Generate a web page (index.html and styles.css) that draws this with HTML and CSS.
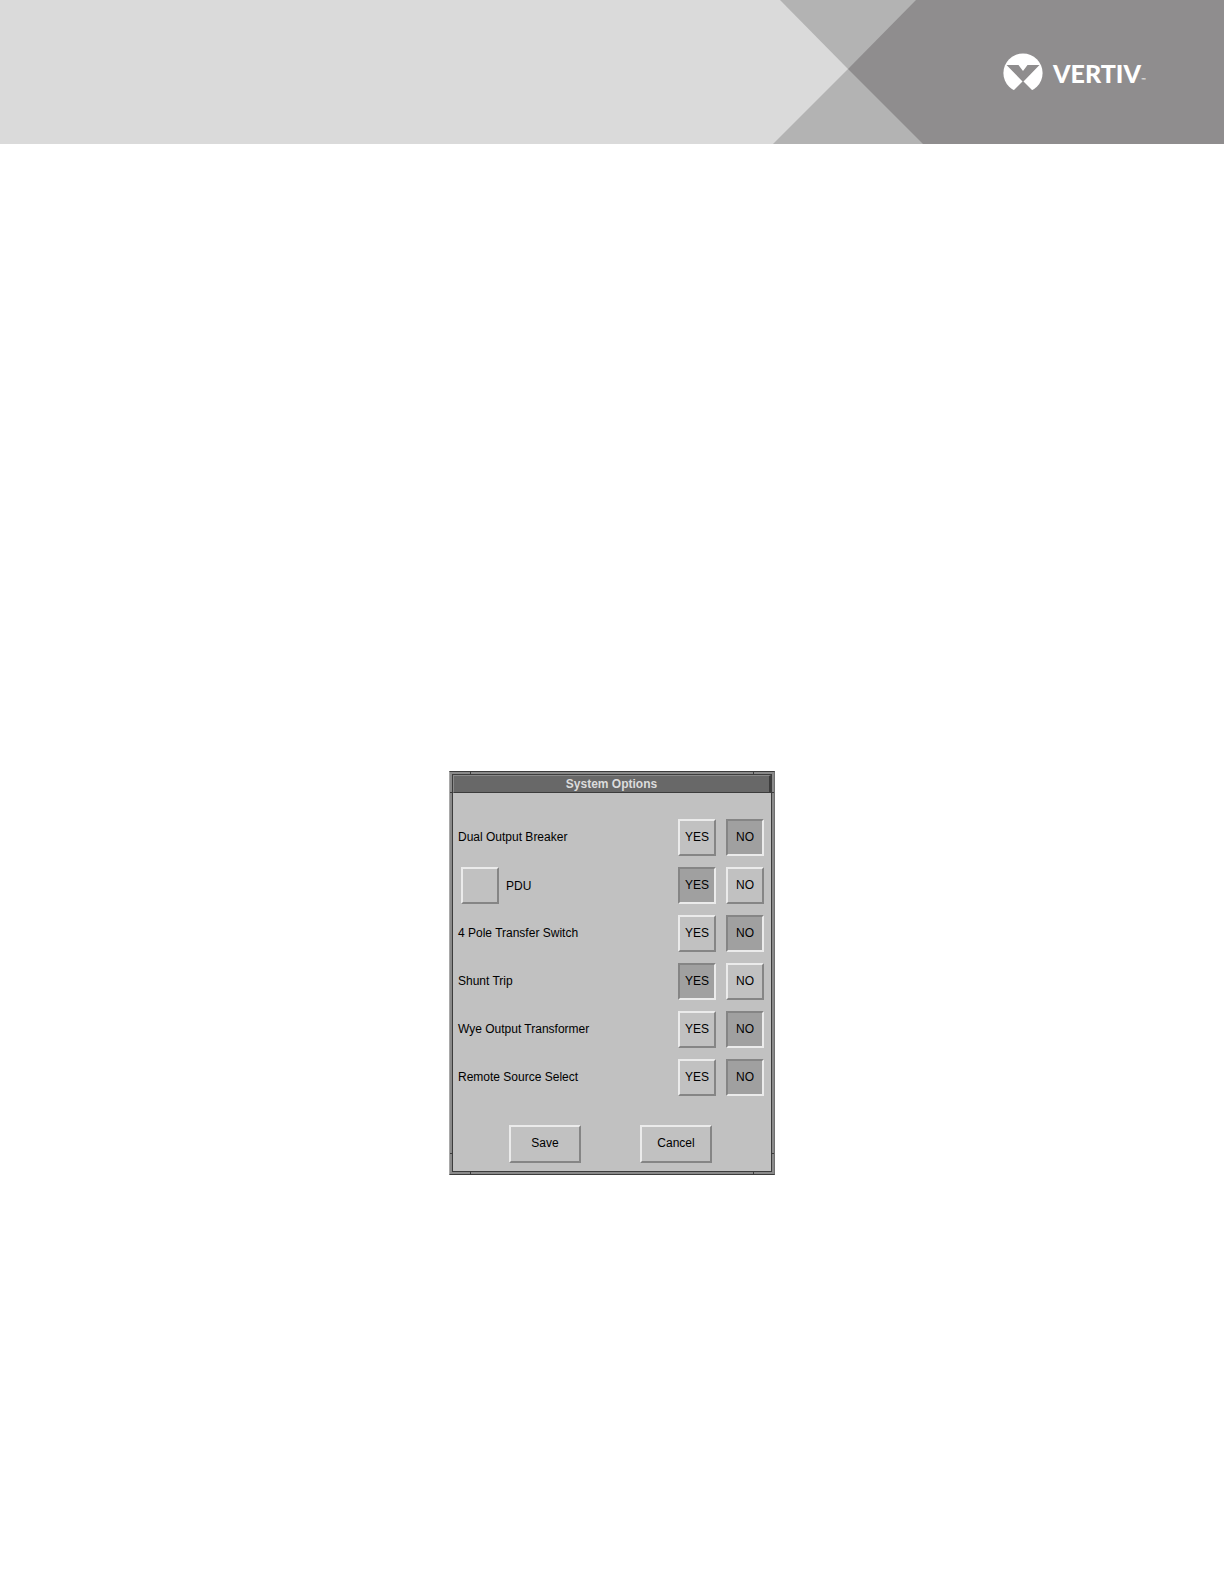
FILE: index.html
```html
<!DOCTYPE html>
<html lang="en">
<head>
    <meta charset="UTF-8">
    <meta name="viewport" content="width=device-width, initial-scale=1.0">
    <title>System Options</title>
    <link rel="stylesheet" href="styles.css">
</head>
<body>
    <header class="banner">
        <svg class="banner-shape" width="150" height="144" viewBox="0 0 150 144" aria-hidden="true">
            <rect width="150" height="144" fill="#b3b3b3"/>
            <path d="M0 0H7L75 69L0 144Z" fill="#dadada"/>
            <path d="M150 0H143L75 69L150 144Z" fill="#8f8d8e"/>
        </svg>
        <div class="banner-brand">
            <svg class="brand-mark" width="40" height="40" viewBox="0 0 40 40" aria-hidden="true">
                <circle cx="20" cy="20" r="19.6" fill="#fff"/>
                <path d="M3.5 12H15.5L20 18L24.5 12H36.5L20 29Z" fill="#8f8d8e"/>
                <path d="M20 28L32 40H8Z" fill="#8f8d8e"/>
            </svg>
            <span class="brand-name">VERTIV</span>
            <span class="brand-tm">™</span>
        </div>
    </header>

    <main>
        <section class="window" aria-labelledby="window-title">
            <div class="window-inner">
                <h1 class="title-bar" id="window-title">System Options</h1>

                <div class="options">
                    <div class="option" role="group" aria-labelledby="opt-breaker">
                        <span class="option-label" id="opt-breaker">Dual Output Breaker</span>
                        <button type="button" class="button toggle" aria-pressed="false">YES</button>
                        <button type="button" class="button toggle" aria-pressed="true">NO</button>
                    </div>
                    <div class="option" role="group" aria-labelledby="opt-pdu">
                        <div class="option-label with-button">
                            <button type="button" class="button toggle" aria-labelledby="opt-pdu"></button>
                            <span id="opt-pdu">PDU</span>
                        </div>
                        <button type="button" class="button toggle" aria-pressed="true">YES</button>
                        <button type="button" class="button toggle" aria-pressed="false">NO</button>
                    </div>
                    <div class="option" role="group" aria-labelledby="opt-switch">
                        <span class="option-label" id="opt-switch">4 Pole Transfer Switch</span>
                        <button type="button" class="button toggle" aria-pressed="false">YES</button>
                        <button type="button" class="button toggle" aria-pressed="true">NO</button>
                    </div>
                    <div class="option" role="group" aria-labelledby="opt-shunt">
                        <span class="option-label" id="opt-shunt">Shunt Trip</span>
                        <button type="button" class="button toggle" aria-pressed="true">YES</button>
                        <button type="button" class="button toggle" aria-pressed="false">NO</button>
                    </div>
                    <div class="option" role="group" aria-labelledby="opt-wye">
                        <span class="option-label" id="opt-wye">Wye Output Transformer</span>
                        <button type="button" class="button toggle" aria-pressed="false">YES</button>
                        <button type="button" class="button toggle" aria-pressed="true">NO</button>
                    </div>
                    <div class="option" role="group" aria-labelledby="opt-remote">
                        <span class="option-label" id="opt-remote">Remote Source Select</span>
                        <button type="button" class="button toggle" aria-pressed="false">YES</button>
                        <button type="button" class="button toggle" aria-pressed="true">NO</button>
                    </div>
                </div>

                <div class="actions">
                    <button type="button" class="button action">Save</button>
                    <button type="button" class="button action">Cancel</button>
                </div>
            </div>
        </section>
    </main>

    <script>
        // YES and NO of a row exclude each other
        document.querySelectorAll('.option').forEach(option => {
            const pair = option.querySelectorAll('[aria-pressed]');
            pair.forEach(button => {
                button.addEventListener('click', () => {
                    pair.forEach(other => other.setAttribute('aria-pressed', other === button));
                });
            });
        });
    </script>
</body>
</html>
```

FILE: styles.css
```css
* {
    box-sizing: border-box;
}

body {
    margin: 0;
    min-height: 100vh;
    background: #fff;
    color: #000;
    font-family: "Liberation Sans", Arial, sans-serif;
    font-size: 12px;
}

/* Banner */
.banner {
    display: flex;
    height: 144px;
    background: #dadada;
}

.banner-shape {
    flex: none;
    margin-left: auto;
}

.banner-brand {
    display: flex;
    align-items: center;
    width: 301px;
    padding: 2px 0 0 80px;
    background: #8f8d8e;
    color: #fff;
    font-family: Lato, "Open Sans", sans-serif;
}

.brand-mark {
    margin-right: 10px;
}

.brand-name {
    font-size: 25px;
    font-weight: 900;
    line-height: 40px;
}

.brand-tm {
    padding-top: 12px;
    font-size: 6px;
}

main {
    padding: 627px 20px 40px;
}

/* Window with its resize frame; the gradients are the corner notches */
.window {
    width: 326px;
    margin: 0 auto;
    padding: 2px;
    border: 1px solid #3c3c3c;
    border-left-color: #a8a8a8;
    border-right-color: #707070;
    background:
        linear-gradient(#3c3c3c, #3c3c3c) 20px 0 / 1px 100%,
        linear-gradient(#3c3c3c, #3c3c3c) right 20px top 0 / 1px 100%,
        linear-gradient(#3c3c3c, #3c3c3c) 0 20px / 100% 1px,
        linear-gradient(#3c3c3c, #3c3c3c) left 0 bottom 20px / 100% 1px,
        #8a8a8a;
    background-repeat: no-repeat;
}

.window-inner {
    border: 1px solid #3c3c3c;
    background: #c1c1c1;
}

.title-bar {
    margin: 0;
    height: 18px;
    border: 1px solid #8a8a8a;
    border-right: 2px solid #3c3c3c;
    border-bottom: 1px solid #3c3c3c;
    background: #686868;
    color: #dcdcdc;
    font-size: 12px;
    line-height: 17px;
    text-align: center;
}

.options {
    display: grid;
    gap: 11px;
    padding: 26px 7px 29px 5px;
}

.option {
    display: flex;
    align-items: center;
    gap: 10px;
}

.option-label {
    flex: 1;
    padding-bottom: 2px;
}

.with-button {
    display: flex;
    align-items: center;
    gap: 7px;
    padding: 0 0 0 3px;
}

/* Bevelled buttons */
.button {
    padding: 0 0 2px;
    border: 2px solid;
    border-color: #ebebeb #858585 #858585 #ebebeb;
    border-radius: 0;
    background: #c1c1c1;
    color: #000;
    font: inherit;
    cursor: pointer;
}

.button[aria-pressed="true"] {
    border-color: #858585 #ebebeb #ebebeb #858585;
    background: #a0a0a0;
}

.toggle {
    width: 38px;
    height: 37px;
}

.actions {
    display: flex;
    justify-content: center;
    gap: 59px;
    padding: 0 3px 8px 0;
}

.action {
    width: 72px;
    height: 38px;
}
```
